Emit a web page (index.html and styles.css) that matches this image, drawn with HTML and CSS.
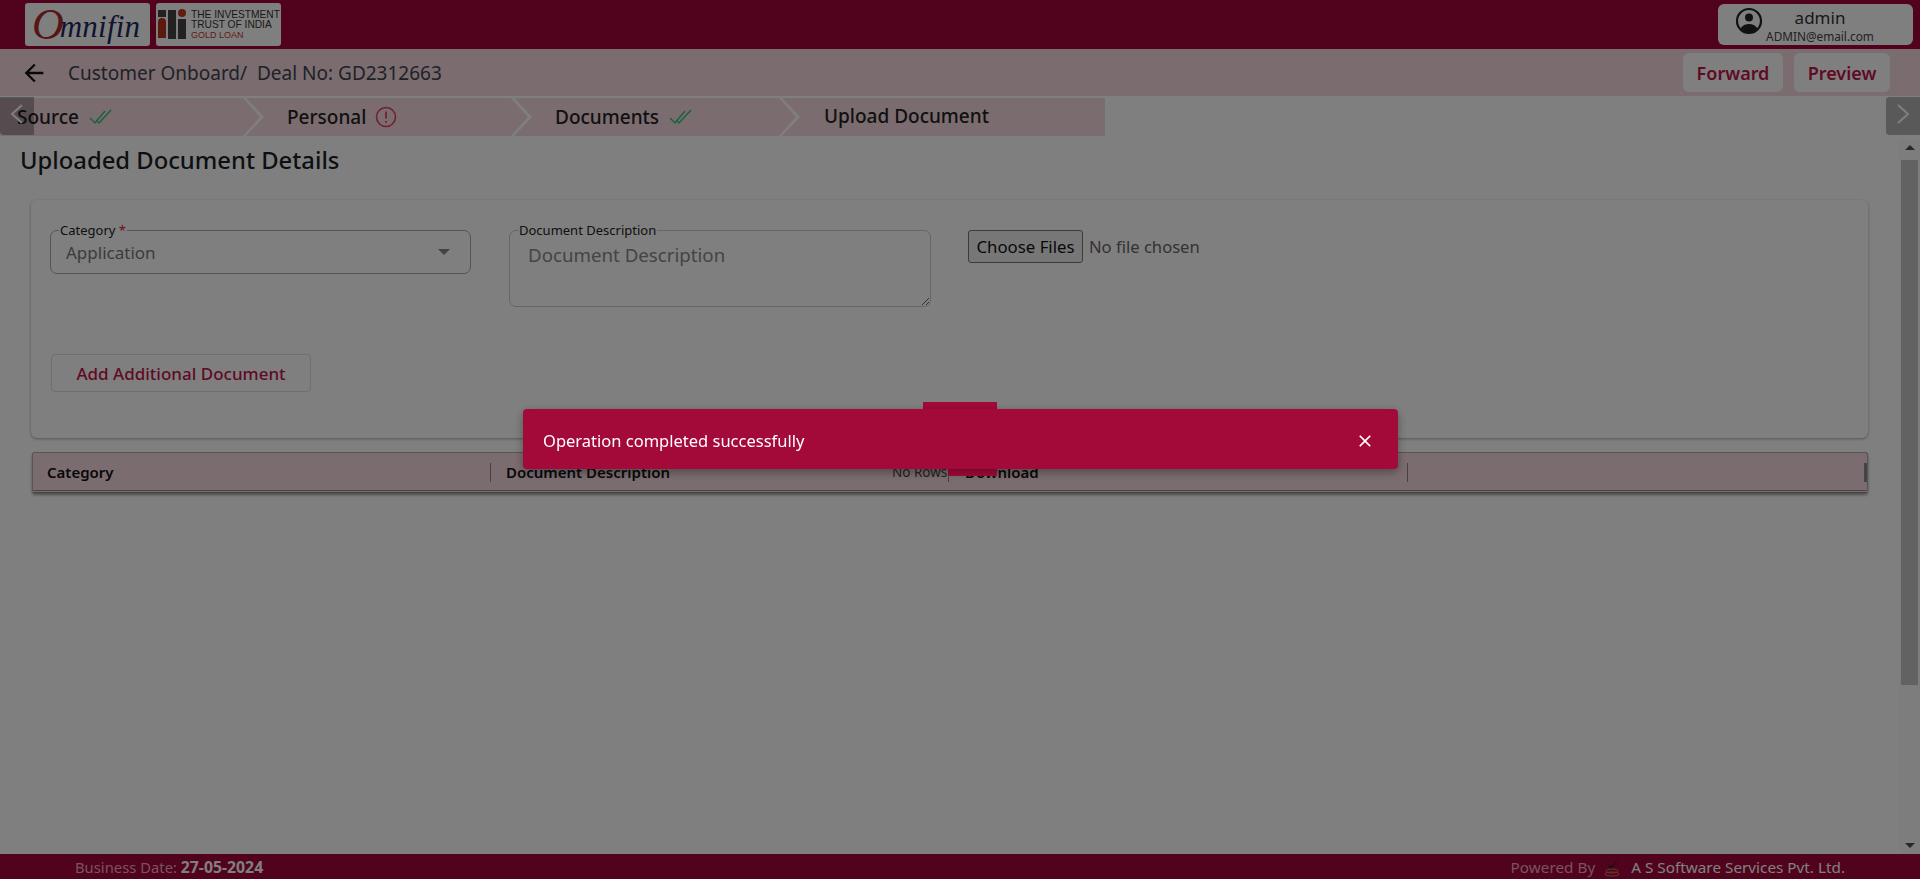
FILE: index.html
```html
<!DOCTYPE html>
<html lang="en">
<head>
    <meta charset="UTF-8">
    <meta name="viewport" content="width=device-width, initial-scale=1.0">
    <title>Upload Document</title>
    <link rel="stylesheet" href="styles.css">
</head>
<body>
    <div class="page">
        <header class="topbar">
            <div class="logos">
                <div class="logo omnifin"><span class="logo-o">O</span><span class="logo-rest">mnifin</span></div>
                <div class="logo iti">
                    <svg class="iti-mark" width="31" height="32" viewBox="0 0 31 32">
                        <rect x="1" y="1" width="8" height="7" fill="#444"/>
                        <path d="M1 13a4 4 0 0 1 8 0v16H1z" fill="#b8321c"/>
                        <rect x="11" y="1" width="8" height="29" fill="#444"/>
                        <circle cx="25" cy="4" r="4" fill="#c9381f"/>
                        <rect x="21" y="10" width="8" height="20" fill="#444"/>
                    </svg>
                    <div class="iti-text">
                        <div>THE INVESTMENT</div>
                        <div>TRUST OF INDIA</div>
                        <div class="iti-gold">GOLD LOAN</div>
                    </div>
                </div>
            </div>
            <div class="user-box">
                <svg class="user-icon" width="30" height="30" viewBox="0 0 30 30">
                    <circle cx="15" cy="15" r="12" fill="none" stroke="#222" stroke-width="2.2"/>
                    <circle cx="15" cy="11.5" r="4" fill="#222"/>
                    <path d="M6.5 22.5c2-3.300 5-4.500 8.500-4.500s6.500 1.200 8.500 4.500c-2 2.600-5 4.300-8.500 4.300s-6.500-1.700-8.500-4.300z" fill="#222"/>
                </svg>
                <div class="user-text">
                    <div class="user-name">admin</div>
                    <div class="user-mail">ADMIN@email.com</div>
                </div>
            </div>
        </header>

        <div class="subbar">
            <svg class="back-icon" width="28" height="28" viewBox="0 0 24 24"><path d="M20 11H7.830l5.590-5.590L12 4l-8 8 8 8 1.410-1.410L7.830 13H20v-2z"/></svg>
            <div class="crumb">Customer Onboard/&nbsp; Deal No: GD2312663</div>
            <div class="subbar-actions">
                <button class="action-btn forward">Forward</button>
                <button class="action-btn preview">Preview</button>
            </div>
        </div>

        <nav class="stepper">
            <div class="step step-source">Source
                <svg class="check" width="24" height="16" viewBox="0 0 24 16"><path d="M1 9l5 5L16 2M7 11l3 3L22 1" fill="none" stroke="#35c47a" stroke-width="1.500"/></svg>
            </div>
            <div class="step step-personal">Personal
                <svg class="alert" width="22" height="22" viewBox="0 0 22 22"><circle cx="11" cy="11" r="9.500" fill="none" stroke="#e0405f" stroke-width="1.600"/><path d="M11 5.500v7M11 15v1.800" stroke="#e0405f" stroke-width="1.800"/></svg>
            </div>
            <div class="step step-docs">Documents
                <svg class="check" width="24" height="16" viewBox="0 0 24 16"><path d="M1 9l5 5L16 2M7 11l3 3L22 1" fill="none" stroke="#35c47a" stroke-width="1.500"/></svg>
            </div>
            <div class="step step-upload">Upload Document</div>
        </nav>

        <main class="main">
            <div class="content">
                <h2 class="title">Uploaded Document Details</h2>
                <section class="card">
                    <div class="fields">
                        <div class="field select-field">
                            <label class="field-label">Category <span class="req">*</span></label>
                            <span class="select-value">Application</span>
                            <span class="select-arrow"></span>
                        </div>
                        <div class="field text-field">
                            <label class="field-label">Document Description</label>
                            <textarea class="desc" placeholder="Document Description"></textarea>
                        </div>
                        <div class="file-field">
                            <button class="file-btn">Choose Files</button>
                            <span class="file-name">No file chosen</span>
                        </div>
                    </div>
                    <button class="add-btn">Add Additional Document</button>
                </section>
                <section class="grid-head">
                    <div class="col col-cat">Category</div>
                    <div class="col col-desc">Document Description</div>
                    <div class="col col-dl"><span class="no-rows">No Rows</span><span class="dl-label">Download</span></div>
                    <div class="col col-end"></div>
                </section>
            </div>
            <div class="scrollbar">
                <span class="sb-up"></span>
                <span class="sb-thumb"></span>
                <span class="sb-down"></span>
            </div>
        </main>

        <footer class="footer">
            <div class="biz-date">Business Date: <b>27-05-2024</b></div>
            <div class="powered">
                <span class="powered-label">Powered By</span>
                <svg class="as-logo" width="18" height="22" viewBox="0 0 18 22">
                    <path d="M4 8l3 5L15 1l-7 8z" fill="#222"/>
                    <ellipse cx="8" cy="14" rx="6" ry="2" fill="none" stroke="#d0785a"/>
                    <ellipse cx="8" cy="17" rx="7" ry="2" fill="none" stroke="#d0785a"/>
                </svg>
                <span class="powered-name">A S Software Services Pvt. Ltd.</span>
            </div>
        </footer>
    </div>

    <button class="nav-arrow nav-left"><svg width="18" height="26" viewBox="0 0 18 26"><path d="M14 4L4 13l10 9" fill="none" stroke="#fff" stroke-width="2"/></svg></button>
    <button class="nav-arrow nav-right"><svg width="18" height="26" viewBox="0 0 18 26"><path d="M4 4l10 9-10 9" fill="none" stroke="#fff" stroke-width="2"/></svg></button>

    <div class="backdrop"></div>

    <div class="loader-bit bit-top"></div>
    <div class="loader-bit bit-bottom"></div>
    <div class="toast">
        <span>Operation completed successfully</span>
        <svg class="toast-close" width="20" height="20" viewBox="0 0 24 24"><path d="M19 6.410L17.590 5 12 10.590 6.410 5 5 6.410 10.590 12 5 17.590 6.410 19 12 13.410 17.590 19 19 17.590 13.410 12z" fill="#fff"/></svg>
    </div>
</body>
</html>
```

FILE: styles.css
```css
* {
    margin: 0;
    padding: 0;
    box-sizing: border-box;
}

body {
    font-family: "Noto Sans", "Open Sans", sans-serif;
    background: #fff;
    color: #1f2937;
    height: 100vh;
    overflow: hidden;
}

button {
    font-family: inherit;
    border: none;
    background: none;
}

.page {
    display: flex;
    flex-direction: column;
    height: 100vh;
}

/* top bar */
.topbar {
    height: 49px;
    flex: none;
    background: #a2043a;
    display: flex;
    justify-content: space-between;
    padding: 3px 7px 0 25px;
}

.logos {
    display: flex;
    gap: 6px;
}

.logo {
    width: 125px;
    height: 43px;
    background: #fff;
    border-radius: 3px;
    display: flex;
    align-items: center;
}

.omnifin {
    padding-left: 7px;
    font-family: "Liberation Serif", serif;
    font-style: italic;
    color: #1d2a5c;
    white-space: nowrap;
    line-height: 36px;
}

.logo-o {
    font-size: 44px;
    line-height: 36px;
    color: #b02a2a;
}

.logo-rest {
    font-size: 31px;
    line-height: 36px;
    letter-spacing: 0.2px;
    margin-left: -4px;
    margin-top: 5px;
}

.iti {
    gap: 3px;
    padding-left: 1px;
}

.iti-text {
    font-family: "Liberation Sans", sans-serif;
    font-size: 10.200px;
    line-height: 10px;
    color: #333;
    white-space: nowrap;
}

.iti-gold {
    color: #c9381f;
    font-size: 9px;
}

.user-box {
    width: 195px;
    height: 41px;
    margin-top: 1px;
    background: #fff;
    border-radius: 6px;
    display: flex;
    padding-left: 16px;
}

.user-icon {
    margin-top: 2px;
}

.user-text {
    width: 110px;
    margin-left: 1px;
    text-align: center;
}

.user-name {
    font-size: 17px;
    line-height: 22px;
    margin-top: 3px;
    color: #333;
}

.user-mail {
    font-size: 11.800px;
    line-height: 15px;
    color: #444;
    white-space: nowrap;
}

/* breadcrumb row */
.subbar {
    height: 47px;
    flex: none;
    background: #f6d9e0;
    display: flex;
    align-items: center;
    padding-left: 20px;
}

.back-icon {
    fill: #111;
}

.crumb {
    margin-left: 20px;
    font-size: 19px;
    color: #3c4450;
}

.subbar-actions {
    margin-left: auto;
    margin-right: 30px;
    display: flex;
    gap: 11px;
}

.action-btn {
    height: 39px;
    background: #fff;
    border-radius: 6px;
    color: #c0144a;
    font-size: 18px;
    font-weight: 600;
}

.forward {
    width: 100px;
}

.preview {
    width: 96px;
}

/* steps */
.stepper {
    height: 43px;
    flex: none;
    padding-top: 2px;
    padding-bottom: 3px;
    display: flex;
    background: #fff;
}

.step {
    height: 38px;
    background: #f6d9e0;
    position: relative;
    display: flex;
    align-items: center;
    font-size: 19px;
    font-weight: 500;
    color: #222;
}

.step-source {
    width: 243px;
    padding-left: 17px;
}

.step-personal {
    width: 268px;
    padding-left: 44px;
}

.step-docs {
    width: 268px;
    padding-left: 44px;
}

.step-upload {
    width: 326px;
    padding-left: 45px;
    padding-bottom: 2px;
}

.step-personal::before,
.step-docs::before,
.step-upload::before {
    content: "";
    position: absolute;
    left: 0;
    top: 0;
    width: 21px;
    height: 38px;
    background: #fff;
    clip-path: polygon(0 0, 3px 0, 21px 19px, 3px 38px, 0 38px, 17px 19px);
}

.check {
    margin-left: 10px;
}

.alert {
    margin-left: 9px;
}

.nav-arrow {
    position: absolute;
    top: 97px;
    width: 34px;
    height: 38px;
    background: rgba(0, 0, 0, 0.3);
    display: flex;
    align-items: center;
    justify-content: center;
    padding-bottom: 4px;
}

.nav-left {
    left: 0;
    border-radius: 0 0 0 4px;
}

.nav-right {
    right: 0;
    border-radius: 4px 0 0 4px;
}

/* main area */
.main {
    flex: 1;
    min-height: 0;
    display: flex;
}

.content {
    flex: 1;
    padding: 5px 32px 0 31px;
}

.title {
    font-size: 23.800px;
    font-weight: 500;
    line-height: 32px;
    margin-left: -11px;
    color: #1a1f26;
}

.card {
    margin-top: 24px;
    height: 238px;
    background: #fff;
    border-radius: 6px;
    box-shadow: 0 1px 3px rgba(0, 0, 0, 0.35);
    padding: 30px 0 0 19px;
}

.fields {
    display: flex;
    height: 124px;
}

.field {
    position: relative;
    border: 1px solid #c8cdd6;
    border-radius: 7px;
}

.field-label {
    position: absolute;
    left: 8px;
    top: -9px;
    background: #fff;
    padding: 0 1px;
    font-size: 13px;
    line-height: 17px;
    color: #222;
}

.req {
    color: #d11a3d;
}

.select-field {
    width: 421px;
    height: 44px;
    border-color: #aaa;
    display: flex;
    align-items: center;
    justify-content: space-between;
    padding: 0 20px 0 15px;
}

.select-value {
    font-size: 17px;
    color: #777;
    margin-top: 1px;
}

.select-arrow {
    width: 0;
    height: 0;
    border-left: 6px solid transparent;
    border-right: 6px solid transparent;
    border-top: 6px solid #888;
}

.text-field {
    width: 422px;
    height: 77px;
    margin-left: 38px;
    display: flex;
}

.desc {
    width: 100%;
    height: 100%;
    border: none;
    outline: none;
    background: none;
    border-radius: 7px;
    padding: 11px 18px;
    font-family: inherit;
    font-size: 18.700px;
}

.desc::placeholder {
    color: #888;
}

.file-field {
    margin-left: 37px;
    display: flex;
    align-items: flex-start;
    height: 32px;
}

.file-btn {
    width: 115px;
    height: 33px;
    border: 1px solid #767676;
    border-radius: 3px;
    background: #efefef;
    font-size: 16.800px;
    color: #111;
}

.file-name {
    margin-left: 6px;
    font-size: 16.600px;
    line-height: 33px;
    color: #666;
}

.add-btn {
    display: block;
    margin-left: 1px;
    width: 260px;
    height: 38px;
    background: #fff;
    border: 1px solid #ddd;
    border-radius: 4px;
    color: #c0144a;
    font-size: 17px;
    font-weight: 500;
}

.grid-head {
    margin-top: 14px;
    margin-left: 1px;
    height: 41px;
    background: #f6d9e0;
    border: 1px solid #aaa;
    border-bottom: 3px double #888;
    border-radius: 3px;
    box-shadow: 0 2px 3px rgba(0, 0, 0, 0.4);
    display: flex;
    align-items: center;
    font-size: 15px;
    font-weight: 600;
    color: #111;
    padding-top: 2px;
}

.col {
    height: 19px;
    line-height: 19px;
    white-space: nowrap;
    border-right: 1px solid #888;
}

.col-cat {
    width: 458px;
    padding-left: 14px;
}

.col-desc {
    width: 458px;
    padding-left: 15px;
}

.col-dl {
    width: 459px;
    position: relative;
}

.no-rows {
    position: absolute;
    left: -57px;
    top: 0;
    font-size: 13.500px;
    font-weight: 400;
    color: #444;
}

.dl-label {
    display: inline-block;
    margin-left: 16px;
}

.col-end {
    flex: 1;
    border-right-width: 3px;
}

/* fake scrollbar, same grey blocks as the browser's own */
.scrollbar {
    width: 21px;
    flex: none;
    background: #fafafa;
    position: relative;
    display: flex;
    flex-direction: column;
    align-items: center;
    margin-left: -1px;
}

.sb-up,
.sb-down {
    width: 0;
    height: 0;
    border-left: 5px solid transparent;
    border-right: 5px solid transparent;
}

.sb-up {
    margin-top: 6px;
    border-bottom: 5px solid #505050;
}

.sb-down {
    margin-top: auto;
    margin-bottom: 6px;
    border-top: 5px solid #505050;
}

.sb-thumb {
    width: 17px;
    height: 525px;
    margin-top: 10px;
    background: #c4c4c4;
}

/* footer */
.footer {
    height: 25px;
    flex: none;
    background: #a2043a;
    display: flex;
    justify-content: space-between;
    align-items: center;
    padding: 1px 75px 0 75px;
    font-size: 15.300px;
    color: #f0a8c0;
}

.biz-date {
    font-size: 14.800px;
}

.biz-date b {
    font-size: 15.800px;
    color: #fff;
}

.powered {
    display: flex;
    align-items: center;
    height: 25px;
}

.as-logo {
    margin: 2px 9px 0 9px;
}

.powered-name {
    color: #fff;
}

/* modal layer */
.backdrop {
    position: fixed;
    inset: 0;
    background: rgba(0, 0, 0, 0.5);
}

.loader-bit {
    position: fixed;
    background: #a30a39;
}

.bit-top {
    left: 923px;
    top: 402px;
    width: 74px;
    height: 10px;
}

.bit-bottom {
    left: 948px;
    top: 465px;
    width: 49px;
    height: 11px;
}

.toast {
    position: fixed;
    left: 523px;
    top: 409px;
    width: 875px;
    height: 60px;
    background: #a30a39;
    border-radius: 4px;
    box-shadow: 0 3px 10px rgba(0, 0, 0, 0.35);
    color: #fff;
    font-size: 16.500px;
    display: flex;
    align-items: center;
    justify-content: space-between;
    padding: 3px 23px 0 20px;
}
```
